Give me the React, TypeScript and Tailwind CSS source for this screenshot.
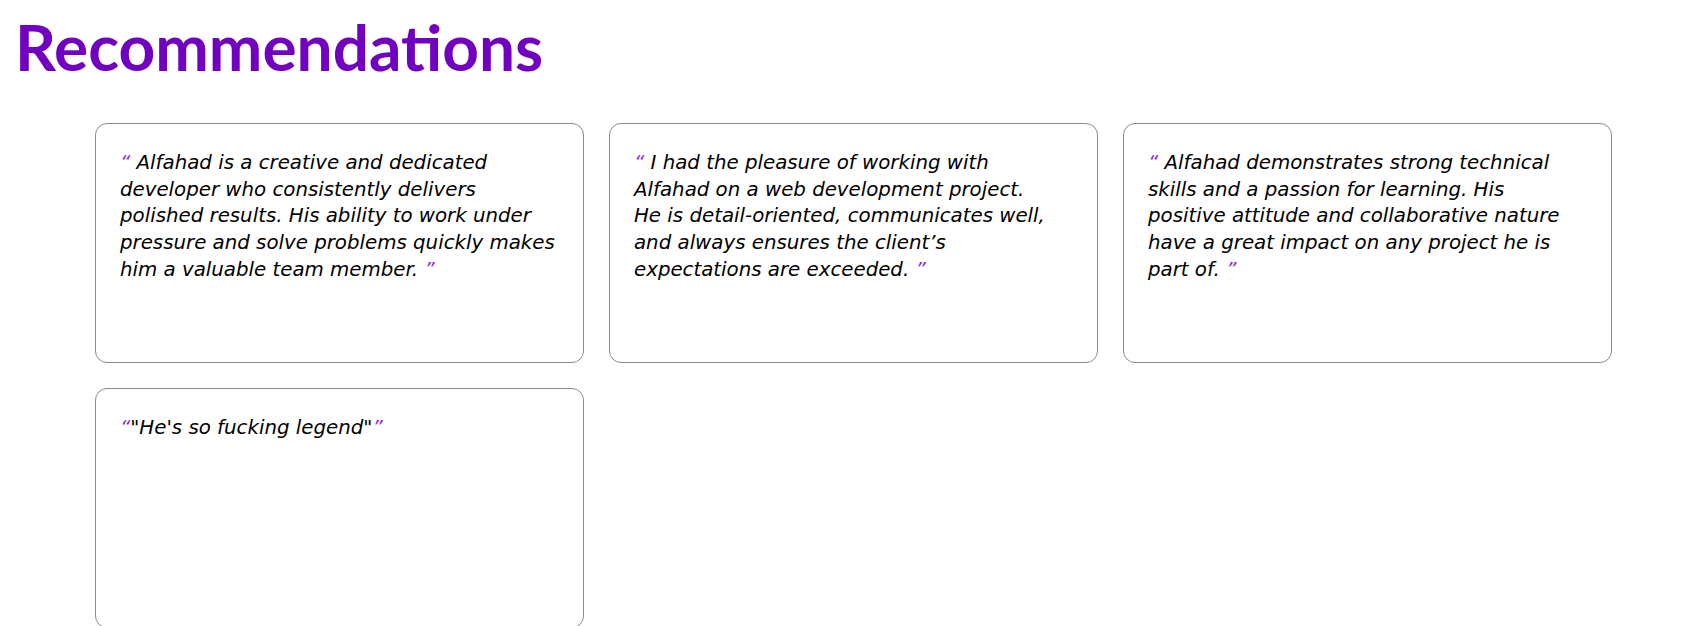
import React from "react";

type Rec = { lines: string[]; spaced: boolean };

const recs: Rec[] = [
  {
    lines: [
      "Alfahad is a creative and dedicated developer who consistently delivers polished results. His ability to work under pressure and solve problems quickly makes him a valuable team member.",
    ],
    spaced: true,
  },
  {
    lines: [
      "I had the pleasure of working with",
      "Alfahad on a web development project.",
      "He is detail-oriented, communicates well,",
      "and always ensures the client\u2019s",
      "expectations are exceeded.",
    ],
    spaced: true,
  },
  {
    lines: [
      "Alfahad demonstrates strong technical skills and a passion for learning. His positive attitude and collaborative nature have a great impact on any project he is part of.",
    ],
    spaced: true,
  },
  {
    lines: ["\"He's so fucking legend\""],
    spaced: false,
  },
];

export default function App() {
  return (
    <div className="min-h-screen bg-white">
      <h1 className="pl-[15px] pt-[15px] font-['Lato',sans-serif] text-[64px] font-bold leading-[64px] text-[#7100c1]">
        Recommendations
      </h1>
      <div className="mt-[44px] grid grid-cols-[repeat(3,489px)] gap-[25px] pl-[95px]">
        {recs.map((r, i) => (
          <div
            key={i}
            className="h-[240px] rounded-[12px] border border-[#8a8a8a] bg-white px-[24px] pt-[26px]"
          >
            <p className="font-['DejaVu_Sans',sans-serif] text-[19.8px] italic leading-[26.7px] text-black">
              <span className="text-[#8a2be2]">{"\u201C"}</span>
              {r.spaced ? " " : ""}
              {r.lines.map((l, j) => (
                <React.Fragment key={j}>
                  {j > 0 && <br />}
                  {l}
                </React.Fragment>
              ))}
              {r.spaced ? " " : ""}
              <span className="text-[#8a2be2]">{"\u201D"}</span>
            </p>
          </div>
        ))}
      </div>
    </div>
  );
}
